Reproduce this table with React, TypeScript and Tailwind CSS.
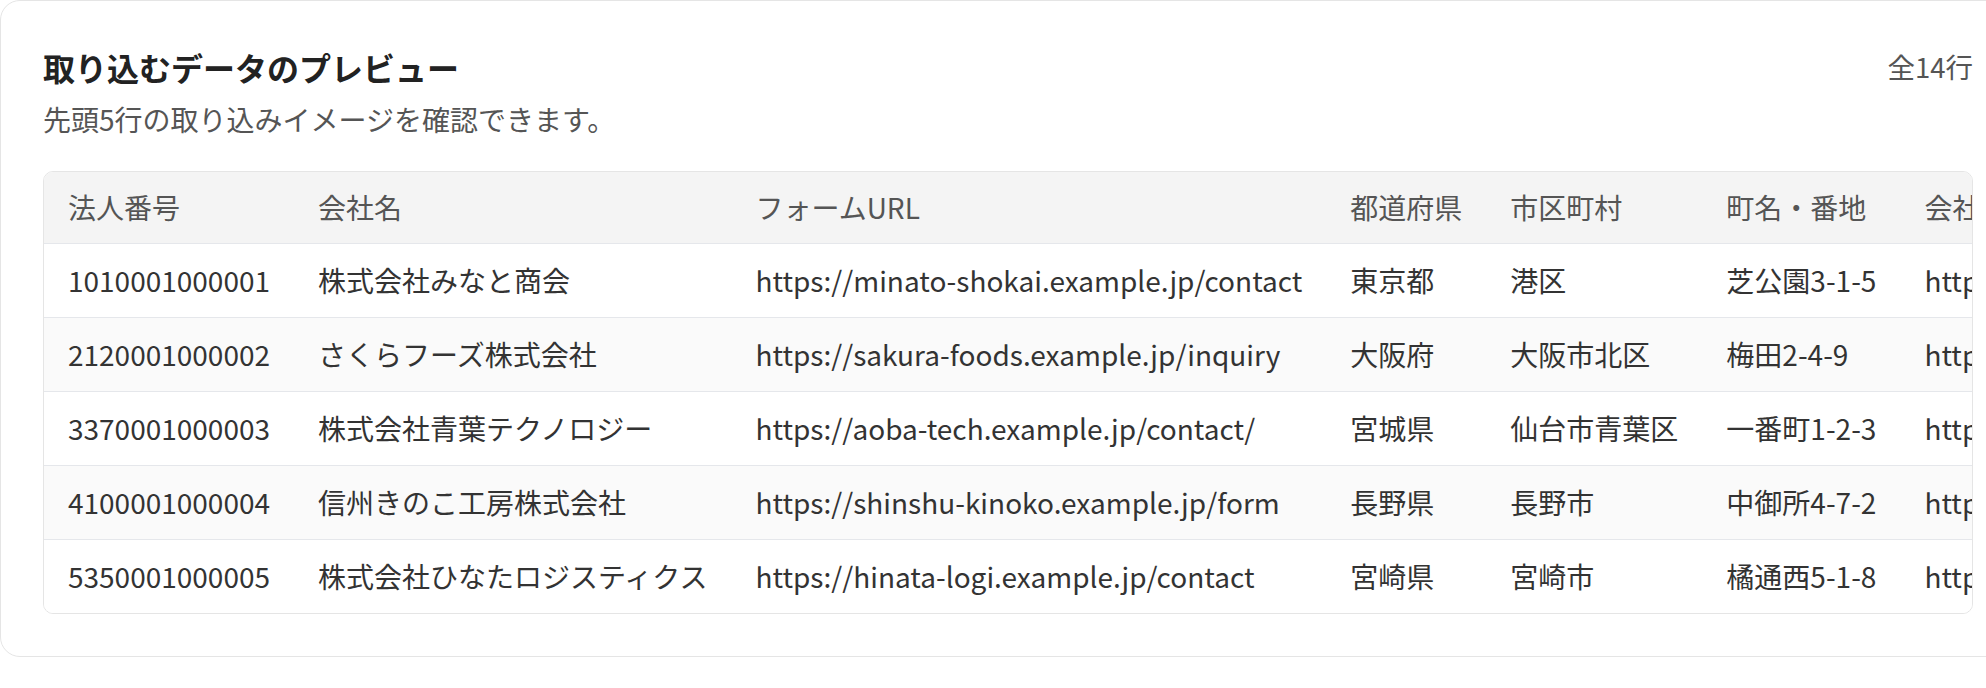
import React from "react";

const headers = ["法人番号", "会社名", "フォームURL", "都道府県", "市区町村", "町名・番地", "会社URL"];

const rows = [
  ["1010001000001", "株式会社みなと商会", "https://minato-shokai.example.jp/contact", "東京都", "港区", "芝公園3-1-5", "https://minato-shokai.example.jp/"],
  ["2120001000002", "さくらフーズ株式会社", "https://sakura-foods.example.jp/inquiry", "大阪府", "大阪市北区", "梅田2-4-9", "https://sakura-foods.example.jp/"],
  ["3370001000003", "株式会社青葉テクノロジー", "https://aoba-tech.example.jp/contact/", "宮城県", "仙台市青葉区", "一番町1-2-3", "https://aoba-tech.example.jp/"],
  ["4100001000004", "信州きのこ工房株式会社", "https://shinshu-kinoko.example.jp/form", "長野県", "長野市", "中御所4-7-2", "https://shinshu-kinoko.example.jp/"],
  ["5350001000005", "株式会社ひなたロジスティクス", "https://hinata-logi.example.jp/contact", "宮崎県", "宮崎市", "橘通西5-1-8", "https://hinata-logi.example.jp/"],
];

export default function App() {
  return (
    <div
      className="w-screen overflow-hidden bg-white"
      style={{ fontFamily: '"Noto Sans CJK JP", "Noto Sans", sans-serif' }}
    >
      <div className="w-[2016px] rounded-[20px] border border-[#e5e5e5] bg-white p-[42px]">
        <div className="flex items-start justify-between">
          <div>
            <h2 className="text-[32px] font-bold leading-[1.5] text-[#222]">取り込むデータのプレビュー</h2>
            <p className="mt-2 text-[28px] leading-[41px] text-[#555]">先頭5行の取り込みイメージを確認できます。</p>
          </div>
          <div className="pt-[3px] text-[27.5px] leading-[1.5] text-[#555]">全14行</div>
        </div>
        <div className="mt-[31px] overflow-hidden rounded-[10px] border border-[#e5e5e5]">
          <table className="w-max min-w-full border-collapse text-left">
            <thead>
              <tr className="bg-[#f4f4f4]">
                {headers.map((h) => (
                  <th
                    key={h}
                    className="whitespace-nowrap px-6 py-[15px] text-[28px] font-normal leading-[41px] text-[#555]"
                  >
                    {h}
                  </th>
                ))}
              </tr>
            </thead>
            <tbody>
              {rows.map((r, i) => (
                <tr
                  key={r[0]}
                  className={`border-t border-[#e5e7eb] ${i % 2 === 1 ? "bg-[#fafafa]" : "bg-white"}`}
                >
                  {r.map((c, j) => (
                    <td
                      key={j}
                      className="whitespace-nowrap px-6 py-4 text-[28px] leading-[41px] text-[#333]"
                    >
                      {c}
                    </td>
                  ))}
                </tr>
              ))}
            </tbody>
          </table>
        </div>
      </div>
    </div>
  );
}
